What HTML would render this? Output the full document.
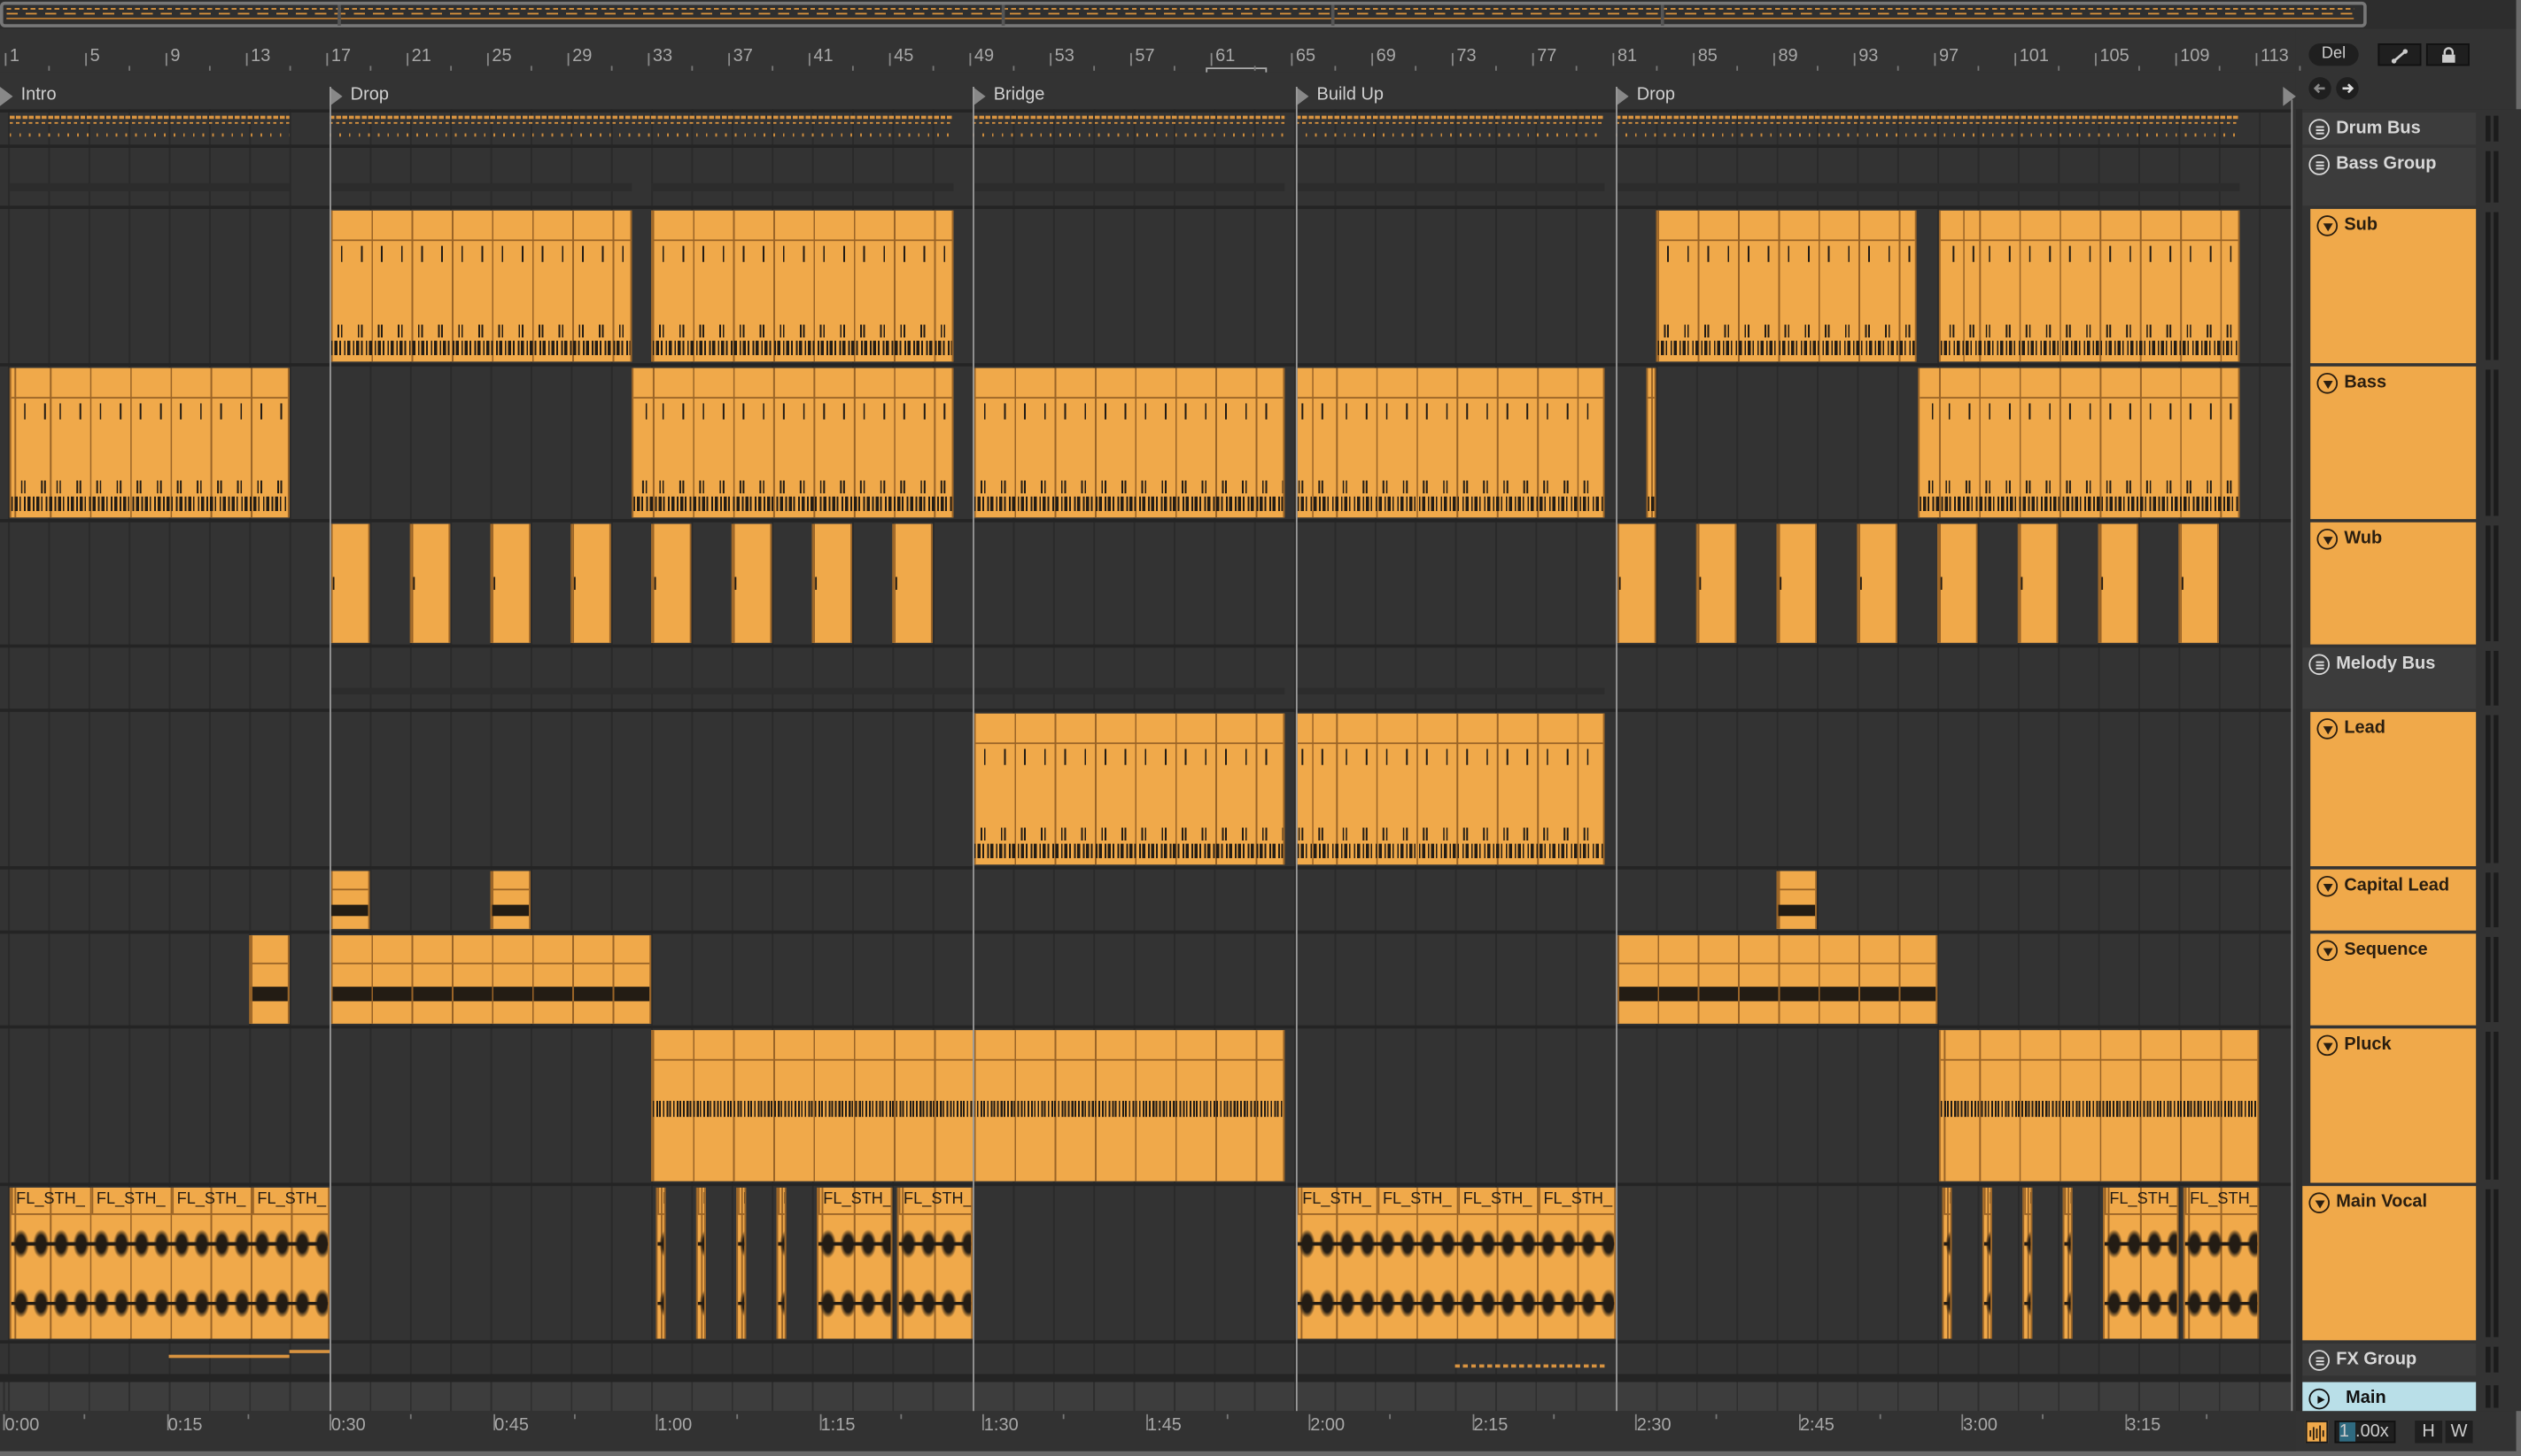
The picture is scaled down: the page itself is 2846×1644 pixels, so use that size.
<!DOCTYPE html>
<html><head><meta charset="utf-8"><style>
*{box-sizing:border-box;margin:0;padding:0}
html,body{width:2846px;height:1644px;overflow:hidden;background:#2a2a2a}
#root{position:absolute;left:0;top:0;width:1568px;height:906px;transform:scale(1.81505,1.81457);transform-origin:0 0;background:#333;font-family:"Liberation Sans",sans-serif;overflow:hidden}
.abs{position:absolute}
.hd{position:absolute;font-weight:bold;font-size:11px;color:#ddd;display:flex;align-items:flex-start;padding:4px 0 0 4px;white-space:nowrap}
.hd.o{background:#f0a94a;color:#2a1e10}
.hd.g{background:#3c3c3c}
.ic{width:13px;height:13px;border-radius:50%;border:1.3px solid currentColor;margin-right:4px;position:relative;flex:none}
.num{position:absolute;top:29px;font-size:11px;color:#a8a8a8}
.tl{position:absolute;top:881px;font-size:11px;color:#a8a8a8}
</style></head><body><div id="root">
<!-- overview -->
<div class="abs" style="left:0;top:0;width:1568px;height:18px;background:#2d2d2d"></div>
<div class="abs" style="left:0;top:1px;width:1472px;height:16px;border:2px solid #777;border-radius:3px;background:#2f2f2f"></div>
<div class="abs" style="left:4px;top:5px;width:1460px;height:1px;background:repeating-linear-gradient(90deg,#d8923c 0 3px,transparent 3px 5px)"></div>
<div class="abs" style="left:4px;top:8px;width:1460px;height:1px;background:repeating-linear-gradient(90deg,#d8923c 0 7px,transparent 7px 12px)"></div>
<div class="abs" style="left:4px;top:11px;width:1460px;height:1px;background:#b97a32"></div>
<div class="abs" style="left:210px;top:3px;width:2px;height:13px;background:#555"></div>
<div class="abs" style="left:623px;top:3px;width:2px;height:13px;background:#555"></div>
<div class="abs" style="left:828px;top:3px;width:2px;height:13px;background:#555"></div>
<div class="abs" style="left:1033px;top:3px;width:2px;height:13px;background:#555"></div>
<!-- ruler -->
<div class="abs" style="left:0;top:18px;width:1568px;height:27px;background:#333"></div>
<div id="nums"></div>
<div class="abs" style="left:750px;top:42px;width:38px;height:10px;border:1px solid #aaa;"></div>
<!-- locator row -->
<div class="abs" style="left:0;top:45px;width:1428px;height:23px;background:#333"></div>
<div id="arr"></div>
<!-- right controls -->
<div class="abs" style="left:1428px;top:18px;width:140px;height:50px;background:#333"></div>
<div class="abs" style="left:1436px;top:27px;width:31px;height:14px;border-radius:7px;background:#1f1f1f;color:#ccc;font-size:10px;text-align:center;line-height:14px">Del</div>
<div class="abs" style="left:1479px;top:27px;width:27px;height:14px;background:#1f1f1f;border:1px solid #111"><svg width="27" height="14"><line x1="9" y1="10" x2="16" y2="4" stroke="#ccc" stroke-width="1.5"/><circle cx="9" cy="10" r="1.5" fill="#ccc"/><circle cx="16" cy="4" r="1.5" fill="#ccc"/></svg></div>
<div class="abs" style="left:1509px;top:27px;width:27px;height:14px;background:#1f1f1f;border:1px solid #111"><svg width="27" height="14"><rect x="9" y="6" width="8" height="5" fill="#ccc"/><path d="M10.5 6V4.5a2.5 2.5 0 0 1 5 0V6" stroke="#ccc" fill="none" stroke-width="1.3"/></svg></div>
<div class="abs" style="left:1436px;top:48px;width:14px;height:14px;border-radius:50%;background:#1f1f1f"><svg width="14" height="14"><path d="M10 7H4M6.5 4.5L4 7l2.5 2.5" stroke="#888" fill="none" stroke-width="1.4"/></svg></div>
<div class="abs" style="left:1453px;top:48px;width:14px;height:14px;border-radius:50%;background:#1f1f1f"><svg width="14" height="14"><path d="M4 7h6M7.5 4.5L10 7l-2.5 2.5" stroke="#ddd" fill="none" stroke-width="1.4"/></svg></div>
<div class="abs" style="left:1420px;top:54px;width:0;height:0;border-top:6px solid transparent;border-bottom:6px solid transparent;border-left:8px solid #888"></div>
<div id="hds"></div>
<div class="abs" style="left:1398px;top:857px;font-size:18px;font-weight:bold;color:#6e6e6e">2/1</div>
<!-- bottom controls -->
<div class="abs" style="left:1428px;top:878px;width:140px;height:28px;background:#333"></div>
<div class="abs" style="left:1434px;top:884px;width:14px;height:14px;background:#f0a94a;border:1px solid #1a1a1a"><svg width="12" height="12"><path d="M2 4v4M4 2v8M6 3v6M8 1v10M10 4v4" stroke="#2a1e10" stroke-width="1"/></svg></div>
<div class="abs" style="left:1452px;top:884px;width:38px;height:14px;background:#1f1f1f;border:1px solid #111;font-size:11px;color:#ccc;line-height:12px;padding-left:2px"><span style="background:#2f6a80;display:inline-block;width:10px">1</span>.00x</div>
<div class="abs" style="left:1502px;top:884px;width:17px;height:14px;background:#1f1f1f;color:#ccc;font-size:11px;text-align:center;line-height:14px">H</div>
<div class="abs" style="left:1521px;top:884px;width:17px;height:14px;background:#1f1f1f;color:#ccc;font-size:11px;text-align:center;line-height:14px">W</div>
<div class="abs" style="left:1565px;top:0;width:3px;height:906px;background:#6a6a6a"></div>
<div class="abs" style="left:0;top:903px;width:1568px;height:3px;background:#6a6a6a"></div>
</div>
<script>
const R=document.getElementById('root');
function el(css,html,p){const d=document.createElement('div');d.style.cssText='position:absolute;'+css;if(html)d.innerHTML=html;(p||R).appendChild(d);return d;}
// ruler numbers
for(let n=1;n<=113;n+=4){const x=5+(n-1)*12.5;el('left:'+(x-2)+'px;top:33px;width:1px;height:8px;background:#888');el('left:'+(x+1)+'px;top:29px;font-size:11px;color:#a8a8a8',String(n));el('left:'+(x+25)+'px;top:41px;width:1px;height:3px;background:#777');}
// rows
const rows=[
['Drum Bus',68,22,'g',0],['Bass Group',90,38,'g',0],['Sub',128,98,'o',1],['Bass',226,97,'o',1],['Wub',323,78,'o',1],
['Melody Bus',401,40,'g',0],['Lead',441,98,'o',1],['Capital Lead',539,40,'o',1],['Sequence',579,59,'o',1],['Pluck',638,98,'o',1],
['Main Vocal',736,98,'o',0],['FX Group',834,22,'g',0],['Main',858,20,'m',0]];
// arrangement background grid
el('left:0;top:68px;width:1428px;height:810px;background:repeating-linear-gradient(90deg,#2a2a2a 0 1px,transparent 1px 25px) 5px 0/25px 100% ,#333');
el('left:0;top:858px;width:1428px;height:20px;background:repeating-linear-gradient(90deg,#2e2e2e 0 1px,#3d3d3d 1px 25px);background-position:5px 0');
rows.forEach(r=>{el('left:0;top:'+r[1]+'px;width:1568px;height:2px;background:#242424');});
el('left:0;top:855px;width:1568px;height:4px;background:#242424');
// header column bg
el('left:1425px;top:68px;width:143px;height:810px;background:#333');
rows.forEach(r=>{
 const [nm,y,h,t,ind]=r;
 const x=ind?1437:1432, w=1540-x;
 const d=el('left:'+x+'px;top:'+(y+2)+'px;width:'+w+'px;height:'+(h-2)+'px');
 d.className='hd '+(t=='o'?'o':t=='g'?'g':'');
 if(t=='m'){d.style.background='#b9dfe8';d.style.color='#111';}
 let ic='';
 if(t=='o')ic='<svg width="10" height="10" style="position:absolute;left:0.5px;top:0.5px"><path d="M2 3h6L5 8z" fill="currentColor"/></svg>';
 else if(t=='g')ic='<svg width="10" height="10" style="position:absolute;left:0.5px;top:0.5px"><path d="M2.5 3h5M2.5 5h5M2.5 7h5" stroke="currentColor" stroke-width="1.1"/></svg>';
 else ic='<svg width="10" height="10" style="position:absolute;left:0.5px;top:0.5px"><path d="M3.5 2.5v5l4.5-2.5z" fill="currentColor"/></svg>';
 d.innerHTML='<div class="ic">'+ic+'</div><span style="line-height:13px'+(t=='m'?';margin-left:6px':'')+'">'+nm+'</span>';
 if(t=='g')d.style.color='#d8d8d8';
 // meter
 el('left:1546px;top:'+(y+4)+'px;width:3px;height:'+(h-6)+'px;background:#1c1c1c');
 el('left:1551px;top:'+(y+4)+'px;width:3px;height:'+(h-6)+'px;background:#1c1c1c');
});
el('left:1428px;top:68px;width:4px;height:810px;background:#2c2c2c');
const O='#f0a94a',L='#9a6427',D='#231c14';
const seg='repeating-linear-gradient(90deg,'+L+' 0 1px,transparent 1px 25px)';
function clip(x1,x2,ri,kind){
 const r=rows[ri];const y=r[1]+3,h=r[2]-4,w=x2-x1;
 const c=el('left:'+x1+'px;top:'+y+'px;width:'+w+'px;height:'+h+'px;background:'+O+';border-left:1px solid '+L+';border-right:1px solid '+L+';overflow:hidden');
 const off=((5-x1)%25+25)%25;
 const hb=kind=='cap'||kind=='seq'?Math.round(h*0.3):kind=='vocal'?16:18;
 el('left:0;top:0;width:100%;height:100%;background:'+seg+';background-position:'+off+'px 0',0,c);
 if(kind!='wub')el('left:0;top:'+hb+'px;width:100%;height:1px;background:'+L,0,c);
 if(kind=='midi'){
  el('left:0;top:'+(hb+4)+'px;width:100%;height:10px;background:repeating-linear-gradient(90deg,transparent 0 6px,'+D+' 6px 7px,transparent 7px 12.5px);background-position:'+off+'px 0',0,c);
  el('left:0;top:'+(h-23)+'px;width:100%;height:8px;background:repeating-linear-gradient(90deg,transparent 0 4px,'+D+' 4px 5px,transparent 5px 6px,'+D+' 6px 7px,transparent 7px 12.5px);background-position:'+off+'px 0',0,c);
  el('left:0;top:'+(h-13)+'px;width:100%;height:9px;background:repeating-linear-gradient(90deg,'+D+' 0 1px,transparent 1px 2px,'+D+' 2px 4px,transparent 4px 5px,'+D+' 5px 6px,transparent 6px 8px,'+D+' 8px 9px,transparent 9px 10px,'+D+' 10px 12px,transparent 12px 13.5px)',0,c);
 }else if(kind=='wub'){
  el('left:1px;top:'+(h/2-4)+'px;width:1px;height:8px;background:'+D,0,c);
 }else if(kind=='cap'){
  el('left:0;top:'+(h*0.58)+'px;width:100%;height:'+(h*0.2)+'px;background:'+D,0,c);
 }else if(kind=='seq'){
  el('left:0;top:'+(h*0.58)+'px;width:100%;height:'+(h*0.17)+'px;background:'+D+';background-image:'+seg+';background-position:'+off+'px 0',0,c);
 }else if(kind=='pluck'){
  el('left:0;top:'+(h*0.47)+'px;width:100%;height:10px;background:repeating-linear-gradient(90deg,'+D+' 0 1px,transparent 1px 2.2px,'+D+' 2.2px 3.4px,transparent 3.4px 4px,'+D+' 4px 5px,transparent 5px 6.3px)',0,c);
 }else if(kind=='vocal'){
  let lab='';for(let k=0;k<w;k+=50)lab+='<span style="position:absolute;left:'+(k+3)+'px;top:2px">FL_STH_</span>';
  el('left:0;top:0;width:100%;height:16px;font-size:10px;color:'+D+';white-space:nowrap',lab,c);
  for(let k=0;k<w;k+=50)el('left:'+k+'px;top:0;width:1px;height:16px;background:'+L,0,c);
  const wv='radial-gradient(ellipse 5px 9px at 6px 50%,'+D+' 60%,transparent 100%) 0 0/12.5px 100%,linear-gradient(transparent 45%,'+D+' 45% 55%,transparent 55%)';
  el('left:0;top:'+(h*0.27)+'px;width:100%;height:20px;background:'+wv,0,c);
  el('left:0;top:'+(h*0.66)+'px;width:100%;height:20px;background:'+wv,0,c);
 }
 return c;
}
// Sub
[[205,393],[405,593],[1030,1192],[1206,1393]].forEach(a=>clip(a[0],a[1],2,'midi'));
// Bass
[[6,180],[393,593],[605,799],[806,998],[1024,1030],[1193,1393]].forEach(a=>clip(a[0],a[1],3,'midi'));
// Wub
[205,255,305,355,405,455,505,555,1005,1055,1105,1155,1205,1255,1305,1355].forEach(x=>clip(x,x+25,4,'wub'));
// Lead
[[605,799],[806,998]].forEach(a=>clip(a[0],a[1],6,'midi'));
// Capital lead
[205,305,1105].forEach(x=>clip(x,x+25,7,'cap'));
// Sequence
[[155,180],[205,405],[1005,1205]].forEach(a=>clip(a[0],a[1],8,'seq'));
// Pluck
[[405,799],[1206,1405]].forEach(a=>clip(a[0],a[1],9,'pluck'));
// Vocal
[[6,205],[508,555],[558,605],[806,1005],[1308,1355],[1358,1405]].forEach(a=>clip(a[0],a[1],10,'vocal'));
[408,433,458,483,1208,1233,1258,1283].forEach(x=>{const c=clip(x,x+6,10,'vocal');});
// drum bus dashes
[[6,180],[205,593],[605,799],[806,998],[1005,1393]].forEach(a=>{
 el('left:'+a[0]+'px;top:72px;width:'+(a[1]-a[0])+'px;height:2px;background:repeating-linear-gradient(90deg,#d89340 0 3px,transparent 3px 4px)');
 el('left:'+a[0]+'px;top:76px;width:'+(a[1]-a[0])+'px;height:1px;background:repeating-linear-gradient(90deg,#d89340 0 2px,transparent 2px 4px)');
 el('left:'+a[0]+'px;top:83px;width:'+(a[1]-a[0])+'px;height:2px;background:repeating-linear-gradient(90deg,#c98a3c 0 1px,transparent 1px 6px)');
});
// group faint bars
[[6,180],[205,393],[405,593],[605,799],[806,998],[1005,1393]].forEach(a=>{el('left:'+a[0]+'px;top:114px;width:'+(a[1]-a[0])+'px;height:5px;background:#2c2c2c');});
[[205,799],[806,998]].forEach(a=>{el('left:'+a[0]+'px;top:428px;width:'+(a[1]-a[0])+'px;height:4px;background:#2c2c2c');});
// fx automation
el('left:105px;top:843px;width:75px;height:1.5px;background:#d89340');
el('left:180px;top:840px;width:25px;height:1.5px;background:#d89340');
el('left:905px;top:849px;width:93px;height:1.5px;background:repeating-linear-gradient(90deg,#d89340 0 3px,transparent 3px 5px)');
// locators
[['Intro',0],['Drop',205],['Bridge',605],['Build Up',806],['Drop',1005]].forEach(a=>{
 el('left:'+a[1]+'px;top:54px;width:0;height:0;border-top:6px solid transparent;border-bottom:6px solid transparent;border-left:8px solid #888');
 el('left:'+(a[1]+13)+'px;top:53px;font-size:11px;color:#d0d0d0',a[0]);
 if(a[1])el('left:'+a[1]+'px;top:54px;width:1px;height:826px;background:#9a9a9a');
});
el('left:1425px;top:62px;width:1px;height:818px;background:#888');
// bottom time ruler
el('left:0;top:878px;width:1428px;height:25px;background:#323232');
['0:00','0:15','0:30','0:45','1:00','1:15','1:30','1:45','2:00','2:15','2:30','2:45','3:00','3:15'].forEach((t,i)=>{
 const x=2+i*101.5;el('left:'+x+'px;top:880px;width:1px;height:10px;background:#888');
 el('left:'+(x+1)+'px;top:881px;font-size:11px;color:#a8a8a8',t);
 el('left:'+(x+50)+'px;top:880px;width:1px;height:3px;background:#777');
});
</script>
</body></html>
